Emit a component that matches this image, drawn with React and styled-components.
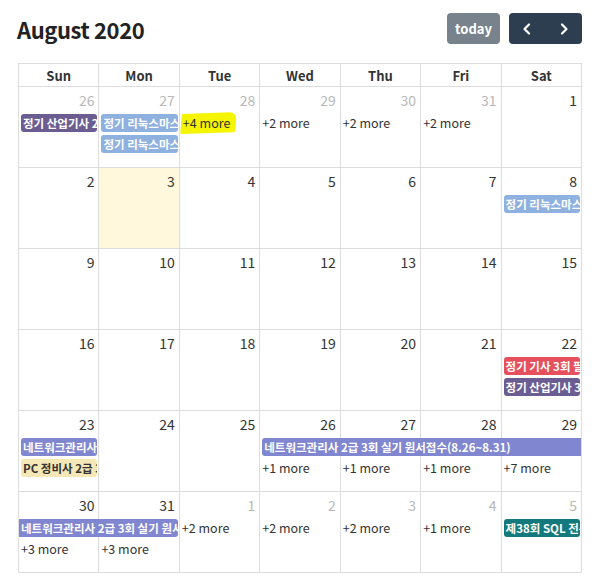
import React from "react";
import styled, { createGlobalStyle } from "styled-components";

const GlobalStyle = createGlobalStyle`
  body {
    margin: 0;
    background: #fff;
    font-family: "Noto Sans CJK KR", "Noto Sans", sans-serif;
    color: #333;
  }
`;

const Page = styled.div`
  padding: 13px 19px 0 18px;
  width: 601px;
  box-sizing: border-box;
`;

const Toolbar = styled.div`
  display: flex;
  align-items: center;
  justify-content: space-between;
  height: 31px;
  margin-bottom: 19px;
`;

const Title = styled.h2`
  margin: 0 0 0 -1px;
  font-size: 22px;
  font-weight: 700;
  letter-spacing: -0.4px;
  color: #222;
`;

const Controls = styled.div`
  display: flex;
  gap: 9px;
`;

const TodayButton = styled.button`
  width: 53px;
  height: 31px;
  border: none;
  border-radius: 4px;
  background: #78828c;
  color: #fff;
  font-family: inherit;
  font-size: 13px;
  font-weight: 700;
  padding: 0;
`;

const NavGroup = styled.div`
  display: flex;
  background: #2c3e50;
  border-radius: 4px;
  height: 31px;
  width: 73px;
`;

const NavButton = styled.button`
  flex: 1;
  border: none;
  background: transparent;
  color: #fff;
  display: flex;
  align-items: center;
  justify-content: center;
  padding: 0;
`;

const Table = styled.div`
  width: 564px;
  border-top: 1px solid #ddd;
  border-left: 1px solid #ddd;
  box-sizing: border-box;
`;

const HeadRow = styled.div`
  display: grid;
  grid-template-columns: repeat(7, 1fr);
  height: 23px;
`;

const HeadCell = styled.div`
  border-right: 1px solid #ddd;
  border-bottom: 1px solid #ddd;
  display: flex;
  align-items: center;
  justify-content: center;
  font-size: 13px;
  font-weight: 700;
  color: #333;
`;

const Week = styled.div`
  display: grid;
  grid-template-columns: repeat(7, 1fr);
  grid-template-rows: 27px 21px 21px 1fr;
  height: 81px;
`;

const DayCell = styled.div`
  grid-row: 1 / -1;
  grid-column: ${(p) => p.$col};
  border-right: 1px solid #ddd;
  border-bottom: 1px solid #ddd;
  background: ${(p) => (p.$today ? "#fff8dc" : "transparent")};
`;

const DayNum = styled.div`
  grid-row: 1;
  grid-column: ${(p) => p.$col};
  text-align: right;
  padding: 3px 5px 0 0;
  font-size: 14px;
  line-height: 20px;
  color: ${(p) => (p.$other ? "#b8b8b8" : "#333")};
`;

const EventBar = styled.div`
  grid-row: ${(p) => p.$row + 1};
  grid-column: ${(p) => p.$col} / span ${(p) => p.$span || 1};
  align-self: start;
  height: 18px;
  margin: 0 ${(p) => (p.$contR ? "1px" : "2px")} 0 ${(p) => (p.$contL ? "0" : "2px")};
  padding: 0 2px;
  border-radius: ${(p) => (p.$contL ? "0" : "3px")} ${(p) => (p.$contR ? "0" : "3px")}
    ${(p) => (p.$contR ? "0" : "3px")} ${(p) => (p.$contL ? "0" : "3px")};
  background: ${(p) => p.$bg};
  color: ${(p) => p.$fg || "#fff"};
  font-size: 11.5px;
  font-weight: 700;
  line-height: 18px;
  white-space: nowrap;
  overflow: hidden;
  position: relative;
  z-index: 1;
`;

const More = styled.div`
  grid-row: ${(p) => p.$row + 1};
  grid-column: ${(p) => p.$col};
  align-self: start;
  padding-left: 2px;
  font-size: 12.5px;
  line-height: 18px;
  color: #333;
  position: relative;
  z-index: 1;
  white-space: nowrap;
`;

const Highlight = styled.span`
  position: relative;
  padding: 0 1px;
  &::before {
    content: "";
    position: absolute;
    left: -1px;
    right: -4px;
    top: 0;
    bottom: -1px;
    background: #f5f500;
    border-radius: 1px 7px 2px 1px;
    transform: rotate(-2deg) skewX(-6deg);
    z-index: -1;
  }
`;

const C = {
  purple: "#6b5c92",
  blue: "#8eb1e0",
  red: "#e5505c",
  net: "#8086cf",
  beige: "#f6e8b6",
  teal: "#13797d",
};

const weeks = [
  {
    days: [26, 27, 28, 29, 30, 31, 1],
    other: [1, 1, 1, 1, 1, 1, 0],
    items: [
      { t: "event", col: 1, row: 1, bg: C.purple, text: "정기 산업기사 2회 실기 원서접수" },
      { t: "event", col: 2, row: 1, bg: C.blue, text: "정기 리눅스마스터 2급 원서접수" },
      { t: "event", col: 2, row: 2, bg: C.blue, text: "정기 리눅스마스터 1급 원서접수" },
      { t: "more", col: 3, row: 1, n: 4, mark: true },
      { t: "more", col: 4, row: 1, n: 2 },
      { t: "more", col: 5, row: 1, n: 2 },
      { t: "more", col: 6, row: 1, n: 2 },
    ],
  },
  {
    days: [2, 3, 4, 5, 6, 7, 8],
    today: 2,
    items: [{ t: "event", col: 7, row: 1, bg: C.blue, text: "정기 리눅스마스터 시험" }],
  },
  { days: [9, 10, 11, 12, 13, 14, 15], items: [] },
  {
    days: [16, 17, 18, 19, 20, 21, 22],
    items: [
      { t: "event", col: 7, row: 1, bg: C.red, text: "정기 기사 3회 필기 시험" },
      { t: "event", col: 7, row: 2, bg: C.purple, text: "정기 산업기사 3회 필기 시험" },
    ],
  },
  {
    days: [23, 24, 25, 26, 27, 28, 29],
    items: [
      { t: "event", col: 1, row: 1, bg: C.net, text: "네트워크관리사 2급 3회 필기" },
      { t: "event", col: 1, row: 2, bg: C.beige, fg: "#333", text: "PC 정비사 2급 3회 필기" },
      { t: "event", col: 4, span: 4, row: 1, bg: C.net, contR: true, text: "네트워크관리사 2급 3회 실기 원서접수(8.26~8.31)" },
      { t: "more", col: 4, row: 2, n: 1 },
      { t: "more", col: 5, row: 2, n: 1 },
      { t: "more", col: 6, row: 2, n: 1 },
      { t: "more", col: 7, row: 2, n: 7 },
    ],
  },
  {
    days: [30, 31, 1, 2, 3, 4, 5],
    other: [0, 0, 1, 1, 1, 1, 1],
    items: [
      { t: "event", col: 1, span: 2, row: 1, bg: C.net, contL: true, text: "네트워크관리사 2급 3회 실기 원서접수(8.26~8.31)" },
      { t: "more", col: 1, row: 2, n: 3 },
      { t: "more", col: 2, row: 2, n: 3 },
      { t: "more", col: 3, row: 1, n: 2 },
      { t: "more", col: 4, row: 1, n: 2 },
      { t: "more", col: 5, row: 1, n: 2 },
      { t: "more", col: 6, row: 1, n: 1 },
      { t: "event", col: 7, row: 1, bg: C.teal, text: "제38회 SQL 전문가 시험" },
    ],
  },
];

const Chevron = ({ dir }) => (
  <svg width="14" height="14" viewBox="0 0 14 14">
    <path
      d={dir === "left" ? "M9 2.5 L4.5 7 L9 11.5" : "M5 2.5 L9.5 7 L5 11.5"}
      fill="none"
      stroke="#fff"
      strokeWidth="2.2"
      strokeLinecap="round"
      strokeLinejoin="round"
    />
  </svg>
);

export default function App() {
  return (
    <Page>
      <GlobalStyle />
      <Toolbar>
        <Title>August 2020</Title>
        <Controls>
          <TodayButton>today</TodayButton>
          <NavGroup>
            <NavButton>
              <Chevron dir="left" />
            </NavButton>
            <NavButton>
              <Chevron dir="right" />
            </NavButton>
          </NavGroup>
        </Controls>
      </Toolbar>
      <Table>
        <HeadRow>
          {["Sun", "Mon", "Tue", "Wed", "Thu", "Fri", "Sat"].map((d) => (
            <HeadCell key={d}>{d}</HeadCell>
          ))}
        </HeadRow>
        {weeks.map((w, wi) => (
          <Week key={wi}>
            {w.days.map((d, i) => (
              <DayCell key={"c" + i} $col={i + 1} $today={w.today === i + 1} />
            ))}
            {w.days.map((d, i) => (
              <DayNum key={"n" + i} $col={i + 1} $other={w.other && w.other[i]}>
                {d}
              </DayNum>
            ))}
            {w.items.map((it, k) =>
              it.t === "event" ? (
                <EventBar
                  key={k}
                  $col={it.col}
                  $span={it.span}
                  $row={it.row}
                  $bg={it.bg}
                  $fg={it.fg}
                  $contL={it.contL}
                  $contR={it.contR}
                >
                  {it.text}
                </EventBar>
              ) : (
                <More key={k} $col={it.col} $row={it.row}>
                  {it.mark ? <Highlight>+{it.n} more</Highlight> : `+${it.n} more`}
                </More>
              )
            )}
          </Week>
        ))}
      </Table>
    </Page>
  );
}
